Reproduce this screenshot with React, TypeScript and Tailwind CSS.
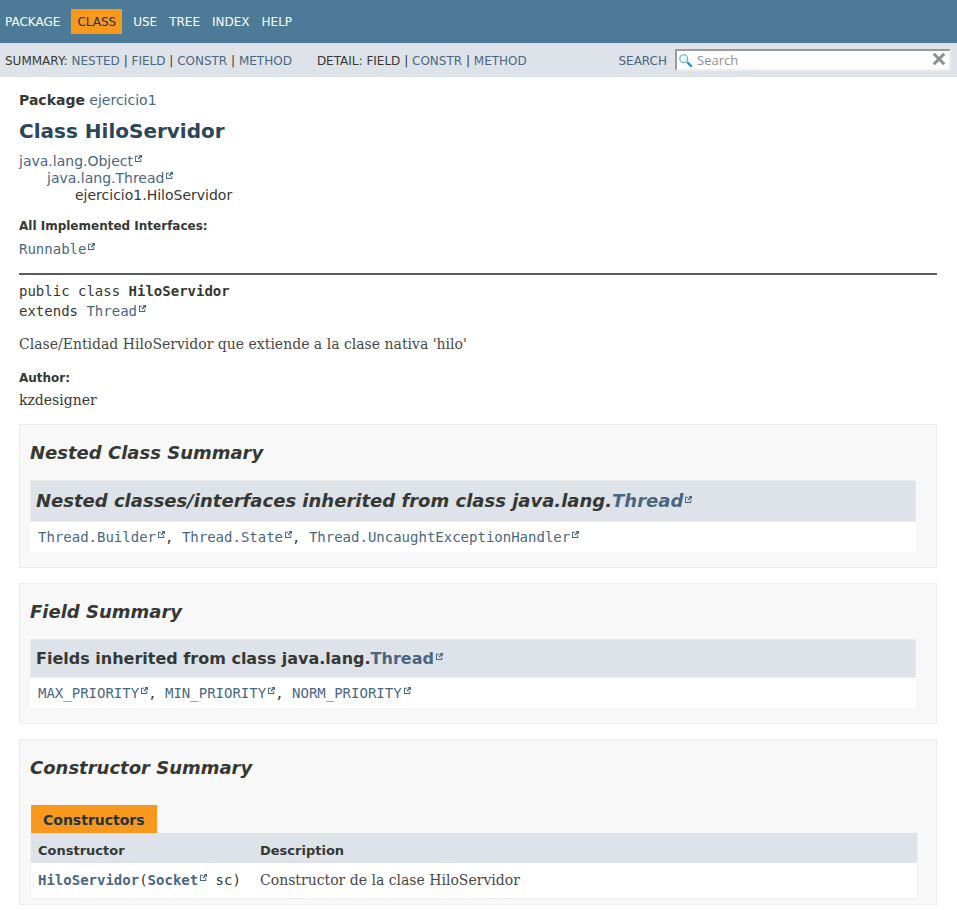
import React from "react";

const SANS = "font-['DejaVu_Sans',sans-serif]";
const MONO = "font-['DejaVu_Sans_Mono',monospace]";
const SERIF = "font-['DejaVu_Serif',serif]";

function Link({ children, external = false }: { children: React.ReactNode; external?: boolean }) {
  return (
    <a href="#" className="text-[#4a6782] hover:text-[#bb7a2a]">
      {children}
      {external && (
        <svg viewBox="0 0 768 768" className="mb-1 ml-0.5 inline-block size-[7px] align-baseline" aria-hidden="true">
          <path
            d="M584 664H104V184h216V80H0v688h688V448H584zM384 0l132 132-240 240 120 120 240-240 132 132V0z"
            fill="#4a6782"
          />
        </svg>
      )}
    </a>
  );
}

function SubNavList({ label, items, className = "" }: { label: string; items: React.ReactNode[]; className?: string }) {
  return (
    <div className={className}>
      {label}{" "}
      {items.map((item, i) => (
        <React.Fragment key={i}>
          {i > 0 && " | "}
          {item}
        </React.Fragment>
      ))}
    </div>
  );
}

function Section({ title, className, children }: { title: string; className: string; children: React.ReactNode }) {
  return (
    <section className={`mb-[15px] border border-[#ededed] bg-[#f8f8f8] pt-[17px] pl-2.5 ${className}`}>
      <h2 className="text-[18px] leading-[21px] font-bold italic">{title}</h2>
      {children}
    </section>
  );
}

function Inherited({ heading, names }: { heading: React.ReactNode; names: string[] }) {
  return (
    <div className="mt-[17px] bg-white">
      {heading}
      <code className={`block px-2 pt-[7px] pb-1.5 text-[14px] leading-[17px] ${MONO}`}>
        {names.map((name, i) => (
          <React.Fragment key={name}>
            {i > 0 && ", "}
            <Link external>{name}</Link>
          </React.Fragment>
        ))}
      </code>
    </div>
  );
}

export default function App() {
  return (
    <div className={`min-h-screen bg-white text-[14px] leading-[17px] text-[#353833] ${SANS}`}>
      <header className="text-[12px] leading-[14px]">
        <nav className="flex items-baseline bg-[#4d7a97] pt-[9px] pb-[9px] pl-[5px] text-white">
          <a href="#">PACKAGE</a>
          <span className="mx-[11px] bg-[#f8981d] px-1.5 pt-[6px] pb-[5px] text-[#253441]">CLASS</span>
          <div className="flex gap-3">
            <a href="#">USE</a>
            <a href="#">TREE</a>
            <a href="#">INDEX</a>
            <a href="#">HELP</a>
          </div>
        </nav>
        <div className="flex h-[34px] items-center bg-[#dee3e9] pr-1.5 pl-[5px]">
          <SubNavList
            label="SUMMARY:"
            className="pt-0.5"
            items={[<Link>NESTED</Link>, <Link>FIELD</Link>, <Link>CONSTR</Link>, <Link>METHOD</Link>]}
          />
          <SubNavList
            label="DETAIL:"
            className="ml-[25px] pt-0.5"
            items={["FIELD", <Link>CONSTR</Link>, <Link>METHOD</Link>]}
          />
          <label htmlFor="search-input" className="ml-auto pt-0.5 text-[#4a6782]">
            SEARCH
          </label>
          <div className="relative ml-2">
            <svg viewBox="0 0 13 13" className="absolute top-[5px] left-1 size-[13px]" aria-hidden="true">
              <circle cx="4.7" cy="4.7" r="3.9" fill="#f3fafd" stroke="#5ba6c8" strokeWidth="1.1" />
              <path d="M7.6 7.6l1.4 1.4" stroke="#5ba6c8" strokeWidth="1.2" />
              <path d="M8.9 8.9l3.1 3.1" stroke="#2a8fc9" strokeWidth="2.4" strokeLinecap="round" />
            </svg>
            <input
              id="search-input"
              type="text"
              placeholder="Search"
              className="block h-[22px] w-[276px] border-2 border-t-[#9a9a9a] border-r-[#eeeeee] border-b-[#eeeeee] border-l-[#9a9a9a] bg-white pr-6 pl-5 font-['Open_Sans',sans-serif] text-[13px] leading-[18px] outline-none placeholder:text-[#909090]"
            />
            <button type="button" aria-label="Clear search" className="absolute top-[3px] right-[5px] size-[14px]">
              <svg viewBox="0 0 12 12" className="size-[14px]">
                <path d="M1.5 1.5l9 9M10.5 1.5l-9 9" stroke="#8b8f91" strokeWidth="2.6" />
              </svg>
            </button>
          </div>
        </div>
      </header>

      <main className="pt-[15px] pr-5 pl-[19px]">
        <div>
          <span className="font-bold">Package</span> <Link>ejercicio1</Link>
        </div>
        <h1 className="mt-2.5 text-[20px] leading-6 font-bold text-[#2c4557]">Class HiloServidor</h1>

        <div className="mt-2.5">
          <Link external>java.lang.Object</Link>
          <div className="pl-7">
            <Link external>java.lang.Thread</Link>
            <div className="pl-7">ejercicio1.HiloServidor</div>
          </div>
        </div>

        <dl className="mt-[15px]">
          <dt className="text-[12px] leading-[14px] font-bold">All Implemented Interfaces:</dt>
          <dd className={`mt-2 ${MONO}`}>
            <Link external>Runnable</Link>
          </dd>
        </dl>
        <hr className="mt-[15px] border-t-2 border-[#5a5c5a]" />

        <div className={`mt-1.5 leading-5 ${MONO}`}>
          <div>
            public class <span className="font-bold">HiloServidor</span>
          </div>
          <div>
            extends <Link external>Thread</Link>
          </div>
        </div>
        <p className={`mt-[15px] text-[#474747] ${SERIF}`}>Clase/Entidad HiloServidor que extiende a la clase nativa 'hilo'</p>
        <dl className="mt-[18px] mb-[15px]">
          <dt className="text-[12px] leading-[14px] font-bold">Author:</dt>
          <dd className={`mt-[7px] ${SERIF}`}>kzdesigner</dd>
        </dl>

        <Section title="Nested Class Summary" className="pr-5 pb-[15px]">
          <Inherited
            heading={
              <h2 className="border border-[#e9ebee] bg-[#dee3e9] px-[5px] pt-[9px] pb-2.5 text-[18px] leading-[21px] font-bold italic">
                Nested classes/interfaces inherited from class java.lang.<Link external>Thread</Link>
              </h2>
            }
            names={["Thread.Builder", "Thread.State", "Thread.UncaughtExceptionHandler"]}
          />
        </Section>

        <Section title="Field Summary" className="pr-5 pb-[15px]">
          <Inherited
            heading={
              <h3 className="border border-[#e9ebee] bg-[#dee3e9] px-[5px] pt-[9px] pb-[9px] text-[16px] leading-[19px] font-bold">
                Fields inherited from class java.lang.<Link external>Thread</Link>
              </h3>
            }
            names={["MAX_PRIORITY", "MIN_PRIORITY", "NORM_PRIORITY"]}
          />
        </Section>

        <Section title="Constructor Summary" className="pr-[18px] pb-[5px]">
          <table className="mt-[27px] w-full border-separate border-spacing-0 text-left">
            <caption className="pl-px text-left">
              <span className="inline-block h-7 bg-[#f8981d] px-3 pt-[7px] align-top font-bold text-[#253441]">Constructors</span>
            </caption>
            <thead className="bg-[#dee3e9] text-[13px] leading-4">
              <tr>
                <th scope="col" className="w-[222px] border-l border-[#eeeeee] pt-2.5 pb-1 pl-[7px] font-bold">
                  Constructor
                </th>
                <th scope="col" className="border-r border-[#eeeeee] pt-2.5 pb-1 pl-2 font-bold">
                  Description
                </th>
              </tr>
            </thead>
            <tbody className="bg-white">
              <tr>
                <td className={`border-b border-l border-[#eeeeee] py-[9px] pl-[7px] ${MONO}`}>
                  <span className="font-bold">
                    <Link>HiloServidor</Link>
                  </span>
                  (
                  <span className="font-bold">
                    <Link external>Socket</Link>
                  </span>{" "}
                  sc)
                </td>
                <td className={`border-r border-b border-[#eeeeee] py-[9px] pl-2 text-[#474747] ${SERIF}`}>
                  Constructor de la clase HiloServidor
                </td>
              </tr>
            </tbody>
          </table>
        </Section>
      </main>
    </div>
  );
}
